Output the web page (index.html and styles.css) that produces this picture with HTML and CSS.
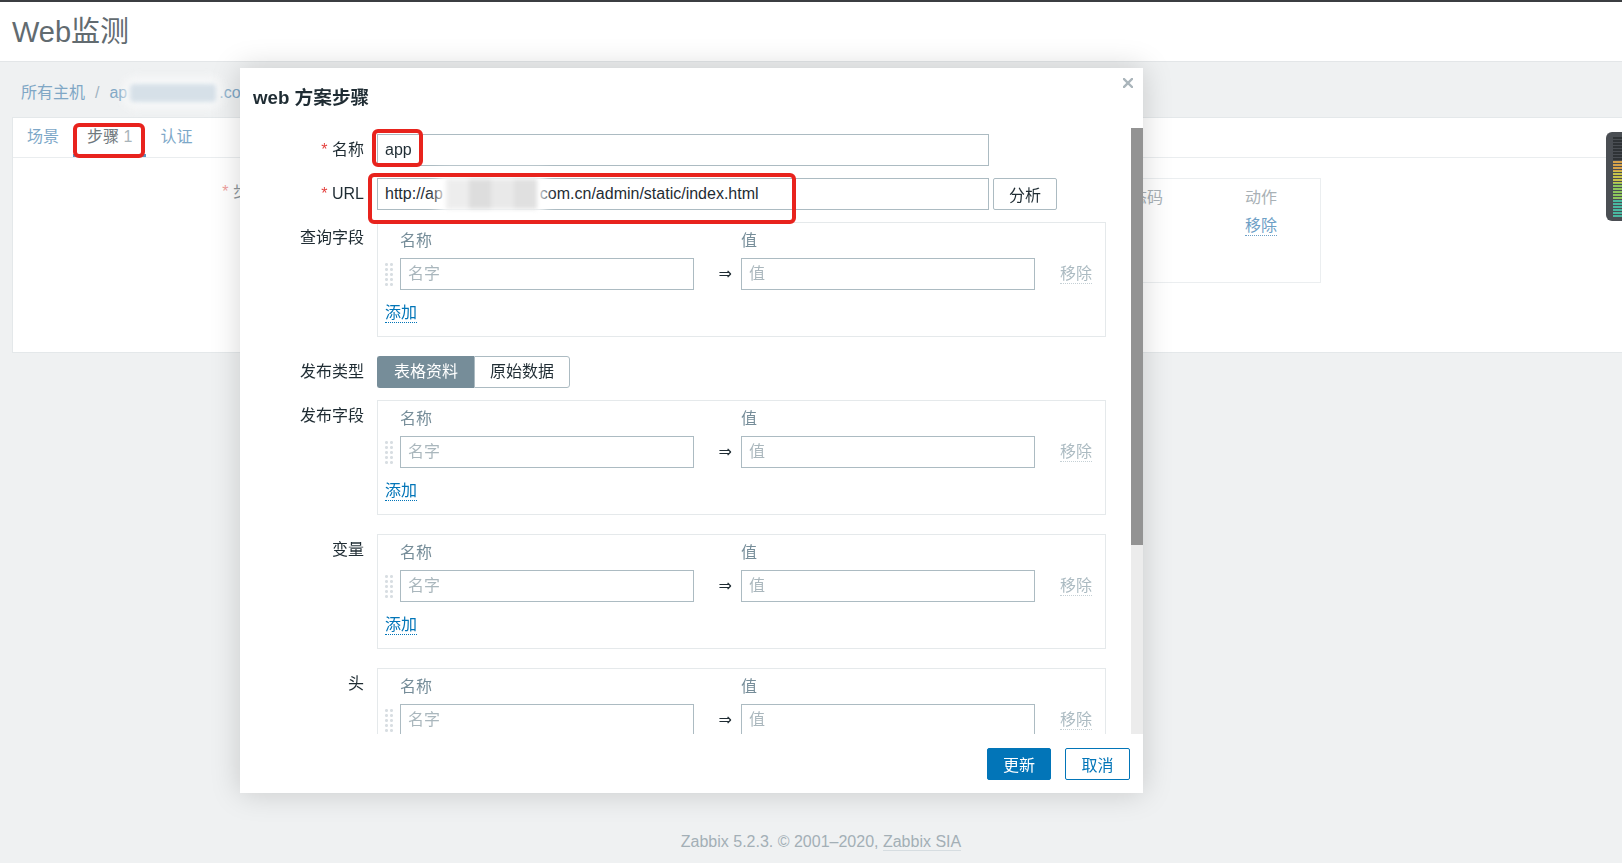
FILE: index.html
```html
<!DOCTYPE html>
<html lang="zh-CN">
<head>
    <meta charset="UTF-8">
    <meta name="viewport" content="width=device-width, initial-scale=1.0">
    <title>Web监测</title>
    <link rel="stylesheet" href="styles.css">
</head>
<body>
    <div class="page">
        <header class="page-header">
            <h1>Web监测</h1>
        </header>

        <div class="breadcrumbs">
            <a>所有主机</a><span class="sep">/</span><a>ap</a><span class="blur blur-crumb"></span><a>.com.cn</a>
        </div>

        <div class="card">
            <ul class="tabs">
                <li>场景</li>
                <li class="active">步骤 <span class="count">1</span><span class="mark mark-tab"></span></li>
                <li>认证</li>
            </ul>
            <div class="card-body">
                <div class="card-row">
                    <label class="req">步骤</label>
                    <div class="steps-table">
                        <div class="steps-head">
                            <span>名称</span><span>超时</span><span>URL</span><span>要求的状态码</span><span>动作</span>
                        </div>
                        <div class="steps-line">
                            <span></span><span></span><span></span><span></span><a class="link-faded">移除</a>
                        </div>
                    </div>
                </div>
            </div>
        </div>

        <footer class="page-footer">Zabbix 5.2.3. © 2001–2020, <a>Zabbix SIA</a></footer>
    </div>

    <!-- 弹出窗口 -->
    <div class="dialogue">
        <div class="dialogue-head">
            <h4>web 方案步骤</h4>
            <button class="btn-close" title="关闭">
                <svg width="10" height="10" viewBox="0 0 10 10"><path d="M1 1 L9 9 M9 1 L1 9" stroke="#aab5bb" stroke-width="2.4" stroke-linecap="square"/></svg>
            </button>
        </div>

        <div class="dialogue-body">
            <div class="dialogue-scroll">
                <div class="form-row">
                    <label class="req">名称</label>
                    <div class="field">
                        <span class="field-wrap">
                            <input class="text-input input-wide" value="app">
                            <span class="mark mark-name"></span>
                        </span>
                    </div>
                </div>

                <div class="form-row">
                    <label class="req">URL</label>
                    <div class="field field-inline">
                        <div class="text-input input-wide url-input"><span>http://ap</span><span class="blur blur-url"></span><span>com.cn/admin/static/index.html</span><span class="mark mark-url"></span></div>
                        <button class="btn-grey">分析</button>
                    </div>
                </div>

                <div class="form-row sep">
                    <label>查询字段</label>
                    <div class="pair-box">
                        <span></span><span class="col-head">名称</span><span></span><span class="col-head">值</span><span></span>
                        <span class="drag"></span>
                        <input class="text-input" placeholder="名字">
                        <span class="arrow">⇒</span>
                        <input class="text-input" placeholder="值">
                        <a class="link-off">移除</a>
                        <a class="link-add">添加</a>
                    </div>
                </div>

                <div class="form-row">
                    <label>发布类型</label>
                    <div class="toggle">
                        <button class="on">表格资料</button><button>原始数据</button>
                    </div>
                </div>

                <div class="form-row sep">
                    <label>发布字段</label>
                    <div class="pair-box">
                        <span></span><span class="col-head">名称</span><span></span><span class="col-head">值</span><span></span>
                        <span class="drag"></span>
                        <input class="text-input" placeholder="名字">
                        <span class="arrow">⇒</span>
                        <input class="text-input" placeholder="值">
                        <a class="link-off">移除</a>
                        <a class="link-add">添加</a>
                    </div>
                </div>

                <div class="form-row sep">
                    <label>变量</label>
                    <div class="pair-box">
                        <span></span><span class="col-head">名称</span><span></span><span class="col-head">值</span><span></span>
                        <span class="drag"></span>
                        <input class="text-input" placeholder="名字">
                        <span class="arrow">⇒</span>
                        <input class="text-input" placeholder="值">
                        <a class="link-off">移除</a>
                        <a class="link-add">添加</a>
                    </div>
                </div>

                <div class="form-row">
                    <label>头</label>
                    <div class="pair-box">
                        <span></span><span class="col-head">名称</span><span></span><span class="col-head">值</span><span></span>
                        <span class="drag"></span>
                        <input class="text-input" placeholder="名字">
                        <span class="arrow">⇒</span>
                        <input class="text-input" placeholder="值">
                        <a class="link-off">移除</a>
                    </div>
                </div>
            </div>
            <div class="scrollbar"><div class="thumb"></div></div>
        </div>

        <div class="dialogue-foot">
            <button class="btn-primary">更新</button>
            <button class="btn-alt">取消</button>
        </div>
    </div>

    <div class="meter"></div>
</body>
</html>
```

FILE: styles.css
```css
* {
    box-sizing: border-box;
}
html, body {
    margin: 0;
    height: 100%;
}
body {
    background-color: #eff1f2;
    font-family: "Liberation Sans", Arial, "Noto Sans CJK SC", sans-serif;
    font-size: 16px;
    line-height: 18px;
    color: #1f2c33;
    overflow: hidden;
}
button, input {
    font-family: inherit;
    font-size: 16px;
}
.page {
    min-height: 100vh;
    display: flex;
    flex-direction: column;
    border-top: 2px solid #3b3e41;
}
.page-header {
    height: 60px;
    display: flex;
    align-items: center;
    background-color: #fff;
    border-bottom: 1px solid #e3e6e8;
}
.page-header h1 {
    margin: 0;
    padding-left: 12px;
    font-size: 29px;
    font-weight: normal;
    color: #626b70;
}
.breadcrumbs {
    display: flex;
    align-items: center;
    margin: 22px 0 15px 21px;
    color: #80a7c5;
}
.breadcrumbs .sep {
    margin: 0 10px;
    color: #9fb3c1;
}
.blur {
    display: inline-block;
    flex: none;
    filter: blur(2px);
}
.blur-crumb {
    width: 86px;
    height: 18px;
    margin: 0 3px;
    border-radius: 4px;
    background-color: #d6e0e8;
    box-shadow: 0 0 10px 6px rgba(250, 251, 252, 0.85);
}
.card {
    min-height: 236px;
    margin-left: 12px;
    background-color: #fff;
    border: 1px solid #e4e8ea;
    border-right: none;
}
.tabs {
    display: flex;
    margin: 0;
    padding: 0;
    list-style: none;
    border-bottom: 1px solid #eaedef;
}
.tabs li {
    position: relative;
    padding: 10px 14px 11px;
    color: #7da8c8;
}
.tabs li.active {
    color: #6f787d;
    box-shadow: inset 0 -3px 0 #5b93be;
}
.tabs .count {
    color: #a9b4ba;
}
.card-body {
    padding-top: 20px;
}
.card-row {
    display: grid;
    grid-template-columns: 252px 1043px;
    column-gap: 13px;
}
.card-row label {
    text-align: right;
    line-height: 28px;
    color: #8d969b;
}
.req::before {
    content: "* ";
    color: #e4423f;
}
.card-row .req::before {
    color: #eea09e;
}
.steps-table {
    height: 105px;
    border: 1px solid #ebeef0;
    padding: 10px 14px 0 12px;
}
.steps-head, .steps-line {
    display: grid;
    grid-template-columns: 1fr 100px 300px 178px 61px;
}
.steps-head {
    color: #a9b1b6;
}
.steps-line {
    margin-top: 10px;
}
.link-faded {
    justify-self: start;
    color: #6ea0c6;
    border-bottom: 1px dotted #6ea0c6;
}
.page-footer {
    margin-top: auto;
    padding: 0 0 12px 20px;
    text-align: center;
    color: #a3afb6;
}
.page-footer a {
    border-bottom: 1px solid #d6dde1;
}

/* 弹出窗口 */
.dialogue {
    position: fixed;
    left: 240px;
    top: 68px;
    width: 903px;
    height: 725px;
    display: flex;
    flex-direction: column;
    background-color: #fff;
    box-shadow: 0 0 28px rgba(0, 0, 0, 0.17);
}
.dialogue-head {
    height: 60px;
    flex: none;
    display: flex;
    justify-content: space-between;
    align-items: center;
    padding: 0 10px 0 13px;
}
.dialogue-head h4 {
    margin: 0;
    font-size: 18.7px;
    font-weight: bold;
    color: #1f2c33;
}
.btn-close {
    align-self: flex-start;
    margin-top: 10px;
    width: 10px;
    height: 10px;
    padding: 0;
    border: none;
    background: none;
    line-height: 0;
}
.dialogue-body {
    flex: 1;
    display: flex;
    min-height: 0;
}
.dialogue-scroll {
    flex: 1;
    overflow: hidden;
    padding: 6px 25px 0 13px;
}
.scrollbar {
    width: 12px;
    flex: none;
    background-color: #ececec;
}
.scrollbar .thumb {
    height: 417px;
    background-color: #939393;
}
.form-row {
    display: grid;
    grid-template-columns: 111px 729px;
    column-gap: 13px;
    margin-bottom: 12px;
}
.form-row.sep {
    margin-bottom: 19px;
}
.form-row > label {
    text-align: right;
    line-height: 32px;
}
.field-inline {
    display: flex;
    gap: 4px;
}
.field-wrap {
    position: relative;
    display: inline-block;
}
.text-input {
    height: 32px;
    padding: 0 7px;
    border: 1px solid #acbbc2;
    border-radius: 0;
    background-color: #fff;
    color: #1f2c33;
    outline: none;
}
.text-input::placeholder {
    color: #aab7bd;
}
.input-wide {
    width: 612px;
}
.url-input {
    position: relative;
    display: flex;
    align-items: center;
    white-space: nowrap;
}
.blur-url {
    width: 91px;
    height: 30px;
    margin: 0 3px;
    background-color: #e4e4e4;
    background-image: linear-gradient(90deg, #ededed 0 25%, #dddddd 25% 50%, #e9e9e9 50% 75%, #e0e0e0 75%);
    box-shadow: 0 0 10px 8px rgba(255, 255, 255, 0.9);
}
.btn-grey {
    width: 64px;
    height: 32px;
    border: 1px solid #acbbc2;
    border-radius: 2px;
    background-color: #fff;
    color: #1f2c33;
}
.mark {
    position: absolute;
    border: 4px solid #e8231d;
    border-radius: 6px;
    pointer-events: none;
}
.mark-name {
    left: -5px;
    top: -5px;
    width: 51px;
    height: 38px;
}
.mark-url {
    left: -10px;
    top: -6px;
    width: 428px;
    height: 51px;
}
.mark-tab {
    left: 0;
    top: 5px;
    width: 72px;
    height: 35px;
}
.toggle {
    display: flex;
}
.toggle button {
    height: 32px;
    padding: 0 15px;
    border: 1px solid #acbbc2;
    background-color: #fff;
    color: #1f2c33;
    line-height: 30px;
}
.toggle button:first-child {
    border-radius: 3px 0 0 3px;
    border-right: none;
}
.toggle button:last-child {
    border-radius: 0 3px 3px 0;
}
.toggle button.on {
    padding: 0 16px;
    background-color: #768d99;
    border-color: #768d99;
    color: #fff;
}

/* 名称/值 表格 */
.pair-box {
    display: grid;
    grid-template-columns: 15px 294px 47px 294px 1fr;
    align-items: center;
    border: 1px solid #e5e9eb;
    padding: 9px 12px 13px 7px;
}
.pair-box .col-head {
    color: #768d99;
    margin-bottom: 8px;
}
.pair-box .text-input {
    width: 294px;
}
.drag {
    width: 9px;
    height: 25px;
    background-image: radial-gradient(circle, #d8dee2 1.3px, transparent 1.6px);
    background-size: 5px 5px;
    background-position: -1px 0;
}
.arrow {
    text-align: right;
    padding-right: 9px;
    font-family: "DejaVu Sans", sans-serif;
    font-size: 16px;
}
.link-off {
    justify-self: start;
    margin-left: 25px;
    color: #acbbc2;
    border-bottom: 1px dotted #c5d0d5;
}
.link-add {
    grid-column: 1 / -1;
    justify-self: start;
    margin-top: 14px;
    color: #0275b8;
    border-bottom: 1px dotted #0275b8;
}
.dialogue-foot {
    flex: none;
    display: flex;
    justify-content: flex-end;
    gap: 14px;
    padding: 14px 13px 13px;
}
.dialogue-foot button {
    height: 32px;
    padding: 0;
    border-radius: 2px;
}
.btn-primary {
    width: 64px;
    border: 1px solid #0275b8;
    background-color: #0275b8;
    color: #fff;
}
.btn-alt {
    width: 65px;
    border: 1px solid #0275b8;
    background-color: #fff;
    color: #0275b8;
}

/* 右侧截图工具条 */
.meter {
    position: fixed;
    right: 0;
    top: 132px;
    width: 16px;
    height: 89px;
    border-radius: 6px 0 0 6px;
    border: 2px solid #4a4e53;
    border-right: none;
    background-color: #4a4e53;
    background-image:
        repeating-linear-gradient(180deg, transparent 0 2px, #4a4e53 2px 3px),
        linear-gradient(180deg, #2f3336 0 30%, #d7a24a 30% 42%, #c8c34a 42% 58%, #8ec65c 58% 78%, #49b8a0 78%);
    background-size: 9px 80px, 9px 80px;
    background-position: 5px 3px, 5px 3px;
    background-repeat: no-repeat;
}
```
